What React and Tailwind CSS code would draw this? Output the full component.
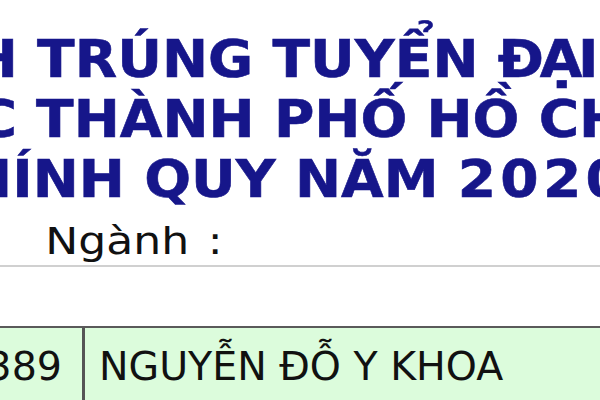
export default function App() {
  const font = { fontFamily: '"DejaVu Sans", Verdana, sans-serif' };
  return (
    <div className="w-[600px] h-[400px] overflow-hidden bg-white" style={font}>
      <div className="pt-[29px] text-[52px] leading-[60px] font-bold text-[#16168a] [-webkit-text-stroke:0.6px_#16168a]">
        <div className="flex whitespace-nowrap origin-left scale-x-[1.06]">
          <span className="w-[35px] shrink-0 flex justify-end">DANH SÁCH THÍ SINH&nbsp;</span>
          <span>TRÚNG TUYỂN <span className="tracking-[-4px]">ĐẠI</span> HỌC</span>
        </div>
        <div className="flex whitespace-nowrap origin-left scale-x-[1.06]">
          <span className="w-[34px] shrink-0 flex justify-end">TRƯỜNG ĐẠI HỌC Y DƯỢC&nbsp;</span>
          <span>THÀNH PHỐ HỒ CHÍ MINH</span>
        </div>
        <div className="flex whitespace-nowrap origin-left scale-x-[1.06]">
          <span className="w-[136px] shrink-0 flex justify-end">HỆ CHÍNH&nbsp;</span>
          <span>QUY NĂM <span className="tracking-[4px]">2020</span></span>
        </div>
      </div>
      <div className="mt-[10px] h-[46px] pl-[39px] text-[38px] leading-[45px] text-[#111] whitespace-nowrap origin-left scale-x-[1.16]">
        Ngành<span className="ml-[16px]">:</span>
      </div>
      <div className="h-[2px] bg-[#d0d0d0]" />
      <div className="mt-[59px] border-t-2 border-[#5a5a5a] bg-[#dcfcdc] flex h-[100px] text-[39.5px] leading-[44px] text-[#111]">
        <div className="w-[82px] shrink-0 flex justify-end pr-[20px] pt-[16px] whitespace-nowrap">1389</div>
        <div className="w-[3px] shrink-0 bg-[#555]" />
        <div className="pl-[14px] pt-[16px] whitespace-nowrap">NGUYỄN ĐỖ Y KHOA</div>
      </div>
    </div>
  );
}
